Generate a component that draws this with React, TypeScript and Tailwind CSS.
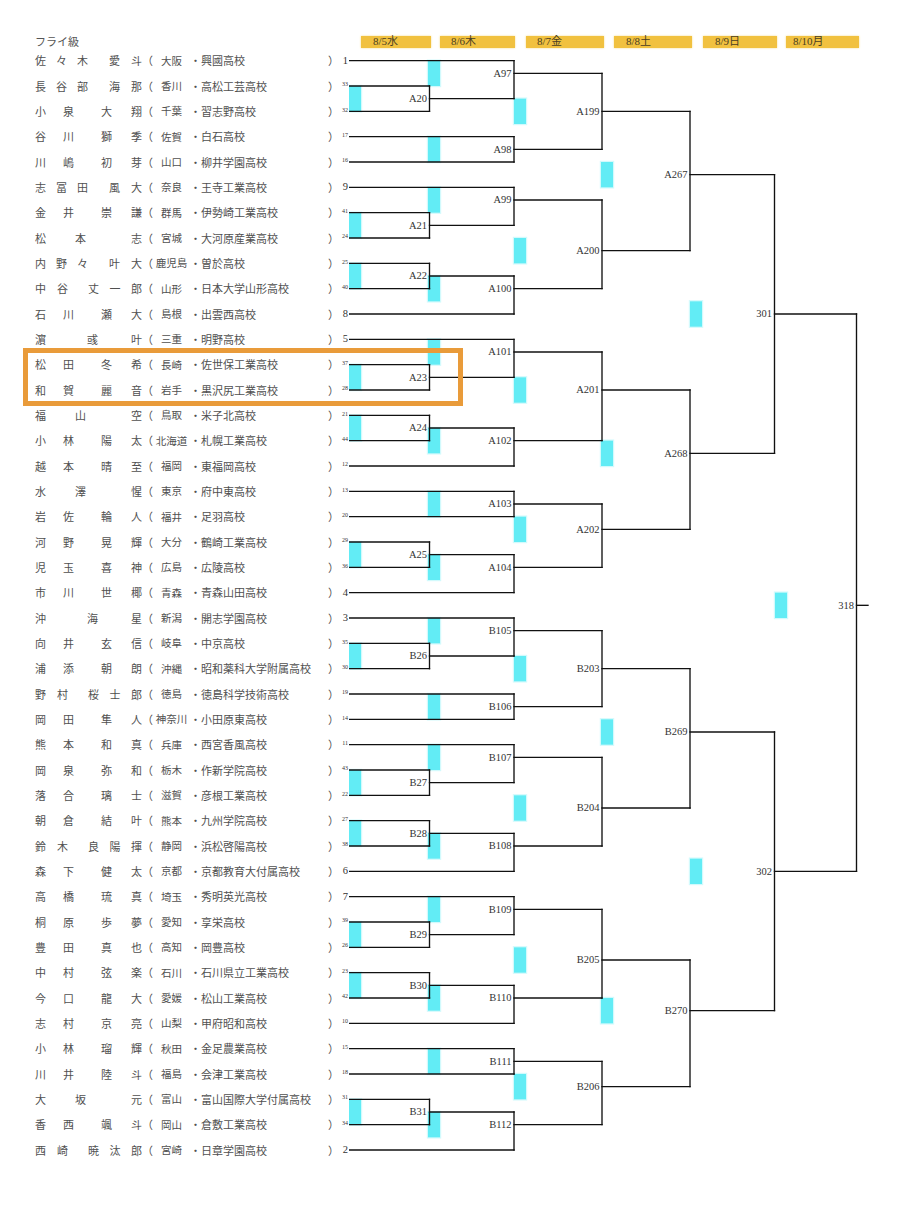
import React from "react";

type Row = [string, string, string, string, number];

const rows: Row[] = [
  ["佐々木", "愛斗", "大阪", "興國高校", 1],
  ["長谷部", "海那", "香川", "高松工芸高校", 33],
  ["小泉", "大翔", "千葉", "習志野高校", 32],
  ["谷川", "獅季", "佐賀", "白石高校", 17],
  ["川嶋", "初芽", "山口", "柳井学園高校", 16],
  ["志冨田", "風大", "奈良", "王寺工業高校", 9],
  ["金井", "崇謙", "群馬", "伊勢崎工業高校", 41],
  ["松本", "志", "宮城", "大河原産業高校", 24],
  ["内野々", "叶大", "鹿児島", "曽於高校", 25],
  ["中谷", "丈一郎", "山形", "日本大学山形高校", 40],
  ["石川", "瀬大", "島根", "出雲西高校", 8],
  ["濵", "彧叶", "三重", "明野高校", 5],
  ["松田", "冬希", "長崎", "佐世保工業高校", 37],
  ["和賀", "麗音", "岩手", "黒沢尻工業高校", 28],
  ["福山", "空", "鳥取", "米子北高校", 21],
  ["小林", "陽太", "北海道", "札幌工業高校", 44],
  ["越本", "晴至", "福岡", "東福岡高校", 12],
  ["水澤", "惺", "東京", "府中東高校", 13],
  ["岩佐", "輪人", "福井", "足羽高校", 20],
  ["河野", "晃輝", "大分", "鶴崎工業高校", 29],
  ["児玉", "喜神", "広島", "広陵高校", 36],
  ["市川", "世椰", "青森", "青森山田高校", 4],
  ["沖", "海星", "新潟", "開志学園高校", 3],
  ["向井", "玄信", "岐阜", "中京高校", 35],
  ["浦添", "朝朗", "沖縄", "昭和薬科大学附属高校", 30],
  ["野村", "桜士郎", "徳島", "徳島科学技術高校", 19],
  ["岡田", "隼人", "神奈川", "小田原東高校", 14],
  ["熊本", "和真", "兵庫", "西宮香風高校", 11],
  ["岡泉", "弥和", "栃木", "作新学院高校", 43],
  ["落合", "璃士", "滋賀", "彦根工業高校", 22],
  ["朝倉", "結叶", "熊本", "九州学院高校", 27],
  ["鈴木", "良陽揮", "静岡", "浜松啓陽高校", 38],
  ["森下", "健太", "京都", "京都教育大付属高校", 6],
  ["高橋", "琉真", "埼玉", "秀明英光高校", 7],
  ["桐原", "歩夢", "愛知", "享栄高校", 39],
  ["豊田", "真也", "高知", "岡豊高校", 26],
  ["中村", "弦楽", "石川", "石川県立工業高校", 23],
  ["今口", "龍大", "愛媛", "松山工業高校", 42],
  ["志村", "京亮", "山梨", "甲府昭和高校", 10],
  ["小林", "瑠輝", "秋田", "金足農業高校", 15],
  ["川井", "陸斗", "福島", "会津工業高校", 18],
  ["大坂", "元", "富山", "富山国際大学付属高校", 31],
  ["香西", "颯斗", "岡山", "倉敷工業高校", 34],
  ["西崎", "暁汰郎", "宮崎", "日章学園高校", 2],
];

const FAM_W: Record<string, string> = {
  "2-2": "w-[39px]",
  "3-2": "w-[53px]",
  "2-3": "w-[33px]",
  "1-2": "w-[11px]",
  "2-1": "w-[51px]",
};
const GIV_W: Record<string, string> = {
  "2-2": "w-[41px]",
  "3-2": "w-[33px]",
  "2-3": "w-[54px]",
  "1-2": "w-[55px]",
  "2-1": "w-[11px]",
};

const dates: [string, string, string][] = [
  ["8/5水", "w-[70px] ml-0", "pl-[12px]"],
  ["8/6木", "w-[75px] ml-[9px]", "pl-[11px]"],
  ["8/7金", "w-[78px] ml-[11px]", "pl-[11px]"],
  ["8/8土", "w-[78px] ml-[10px]", "pl-[12px]"],
  ["8/9日", "w-[74px] ml-[11px]", "pl-[12px]"],
  ["8/10月", "w-[73px] ml-[9px]", "pl-[7px]"],
];

const XS = [349, 429.5, 514, 602, 690, 774.5, 856.5];
const CX = [349, 428, 514, 601, 690, 775];
const Y = (h: number) => 61 + (h * 76) / 6;

const r1: [string, number][] = [
  ["A20", 2], ["A21", 7], ["A22", 9], ["A23", 13], ["A24", 15], ["A25", 20],
  ["B26", 24], ["B27", 29], ["B28", 31], ["B29", 35], ["B30", 37], ["B31", 42],
];

const r2: [string, number, number, number, boolean, boolean][] = [
  ["A97", 0, 3, 1, true, false],
  ["A98", 6, 8, 7, true, true],
  ["A99", 10, 13, 11, true, false],
  ["A100", 17, 20, 18, false, true],
  ["A101", 22, 25, 23, true, false],
  ["A102", 29, 32, 30, false, true],
  ["A103", 34, 36, 35, true, true],
  ["A104", 39, 42, 40, false, true],
  ["B105", 44, 47, 45, true, false],
  ["B106", 50, 52, 51, true, true],
  ["B107", 54, 57, 55, true, false],
  ["B108", 61, 64, 62, false, true],
  ["B109", 66, 69, 67, true, false],
  ["B110", 73, 76, 74, false, true],
  ["B111", 78, 80, 79, true, true],
  ["B112", 83, 86, 84, false, true],
];

const later: [number, [string, number, number, number][]][] = [
  [3, [["A199", 1, 7, 4], ["A200", 11, 18, 15], ["A201", 23, 30, 26], ["A202", 35, 40, 37], ["B203", 45, 51, 48], ["B204", 55, 62, 59], ["B205", 67, 74, 71], ["B206", 79, 84, 81]]],
  [4, [["A267", 4, 15, 9], ["A268", 26, 37, 31], ["B269", 48, 59, 53], ["B270", 71, 81, 75]]],
  [5, [["301", 9, 31, 20], ["302", 53, 75, 64]]],
  [6, [["318", 20, 64, 43]]],
];

function Cyan({ x, y1, y2 }: { x: number; y1: number; y2: number }) {
  return (
    <g>
      <rect x={x - 1.2} y={y1 - 1.2} width={14.4} height={y2 - y1 + 2.4} fill="#d2fafc" />
      <rect x={x} y={y1} width={12} height={y2 - y1} fill="#62ecf5" />
    </g>
  );
}

function Label({ x, y, t }: { x: number; y: number; t: string }) {
  return (
    <text x={x - 2.5} y={y} dy="0.33em" textAnchor="end" fontSize={10.5} fontFamily="'Liberation Serif', serif" fill="#333">
      {t}
    </text>
  );
}

function Bracket() {
  const cy: React.ReactNode[] = [];
  const ln: React.ReactNode[] = [];
  const lb: React.ReactNode[] = [];
  const L = (x1: number, y1: number, x2: number, y2: number, k: string) =>
    ln.push(<line key={k} x1={x1} y1={y1} x2={x2} y2={y2} />);

  r1.forEach(([l, row]) => {
    const t = 2 * (row - 1);
    const b = t + 2;
    cy.push(<Cyan key={l} x={CX[0]} y1={Y(t)} y2={Y(b)} />);
    L(XS[0], Y(t), XS[1], Y(t), l + "t");
    L(XS[0], Y(b), XS[1], Y(b), l + "b");
    L(XS[1], Y(t), XS[1], Y(b), l + "v");
    lb.push(<Label key={l} x={XS[1]} y={Y(t + 1)} t={l} />);
  });

  r2.forEach(([l, t, b, o, tb, bb]) => {
    cy.push(<Cyan key={l} x={CX[1]} y1={Y(t)} y2={Y(t + 2)} />);
    L(tb ? XS[0] : XS[1], Y(t), XS[2], Y(t), l + "t");
    L(bb ? XS[0] : XS[1], Y(b), XS[2], Y(b), l + "b");
    L(XS[2], Y(t), XS[2], Y(b), l + "v");
    lb.push(<Label key={l} x={XS[2]} y={Y(o)} t={l} />);
  });

  later.forEach(([r, ms]) => {
    ms.forEach(([l, t, b, o]) => {
      cy.push(<Cyan key={l} x={CX[r - 1]} y1={Y(o - 1)} y2={Y(o + 1)} />);
      L(XS[r - 1], Y(t), XS[r], Y(t), l + "t");
      L(XS[r - 1], Y(b), XS[r], Y(b), l + "b");
      L(XS[r], Y(t), XS[r], Y(b), l + "v");
      lb.push(<Label key={l} x={XS[r]} y={Y(o)} t={l} />);
    });
  });
  L(XS[6], Y(43), 868, Y(43), "final");

  return (
    <svg
      width={531}
      height={1114.667}
      viewBox="349 48.333 531 1114.667"
      className="block shrink-0"
    >
      <g>{cy}</g>
      <g stroke="#111" strokeWidth={1.35} strokeLinecap="square">
        {ln}
      </g>
      <g>{lb}</g>
    </svg>
  );
}

function NameRow({ r }: { r: Row }) {
  const [fam, giv, pref, school, seat] = r;
  const key = `${Array.from(fam).length}-${Array.from(giv).length}`;
  return (
    <div className="flex h-[25.333px] items-center text-[11px] leading-none text-[#505050]">
      <div className="w-[35px] shrink-0" />
      <div className="flex w-[107px] shrink-0 justify-between">
        <div className={`flex justify-between ${FAM_W[key]}`}>
          {Array.from(fam).map((c, i) => (
            <span key={i}>{c}</span>
          ))}
        </div>
        <div className={`flex justify-between ${GIV_W[key]}`}>
          {Array.from(giv).map((c, i) => (
            <span key={i}>{c}</span>
          ))}
        </div>
      </div>
      <span className="w-[11px] shrink-0">（</span>
      <span className="w-[37px] shrink-0 text-center text-[10.5px] whitespace-nowrap">{pref}</span>
      <span className="w-[11px] shrink-0">・</span>
      <span className="w-[127px] shrink-0 whitespace-nowrap">{school}</span>
      <span className="w-[11px] shrink-0">）</span>
      <span className="flex w-[10px] shrink-0 justify-end pr-[1px] font-['Liberation_Serif',serif] text-[#333]">
        {seat < 10 ? (
          <span className="text-[10.5px]">{seat}</span>
        ) : (
          <span className="mb-[4px] text-[6px]">{seat}</span>
        )}
      </span>
    </div>
  );
}

export default function App() {
  return (
    <div className="relative h-[1206px] w-[904px] overflow-hidden bg-white font-['Noto_Sans_CJK_JP',sans-serif]">
      <div className="h-[48.333px] pt-[35.5px]">
        <div className="flex h-[12px] items-center">
          <div className="w-[361px] shrink-0 pl-[35px] text-[11px] leading-none text-[#555]">フライ級</div>
          {dates.map(([d, w, p]) => (
            <div
              key={d}
              className={`flex h-[12px] shrink-0 items-center bg-[#f1c13f] shadow-[0_0_2px_#f6dc8c] ${w} ${p}`}
            >
              <span className="font-['Liberation_Serif','Noto_Sans_CJK_JP',serif] text-[11px] leading-none text-[#4a3e22]">
                {d}
              </span>
            </div>
          ))}
        </div>
      </div>
      <div className="flex">
        <div className="w-[349px] shrink-0">
          {rows.map((r, i) => (
            <NameRow key={i} r={r} />
          ))}
        </div>
        <Bracket />
      </div>
      <div className="absolute left-[23px] top-[348px] h-[58px] w-[440px] border-[5px] border-[#e99b3a]" />
    </div>
  );
}
